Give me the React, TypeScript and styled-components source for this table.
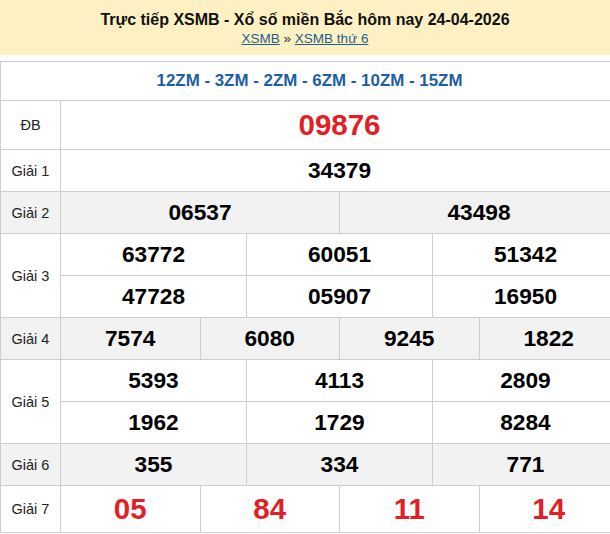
import React from "react";
import styled, { createGlobalStyle } from "styled-components";

const GlobalStyle = createGlobalStyle`
  html, body {
    margin: 0;
    padding: 0;
    overflow: hidden;
    background: #ffffff;
    font-family: "Liberation Sans", Arial, sans-serif;
  }
`;

const StyledPage = styled.div`
  width: 619px;
`;

const StyledHeader = styled.div`
  display: flex;
  flex-direction: column;
  align-items: center;
  justify-content: center;
  box-sizing: border-box;
  height: 55px;
  padding-top: 3px;
  background: #fdf1c4;
  margin-bottom: 6px;
  width: 610px;
`;

const StyledTitle = styled.h1`
  margin: 0;
  font-size: 16px;
  font-weight: bold;
  color: #111;
  line-height: 20px;
`;

const StyledCrumbs = styled.div`
  font-size: 13.5px;
  line-height: 18px;
  color: #333;
`;

const StyledCrumbLink = styled.a`
  color: #1e5e8e;
  text-decoration: underline;
`;

const StyledTable = styled.table`
  width: 619px;
  border-collapse: collapse;
  table-layout: fixed;
`;

const StyledCell = styled.td<{ $gray?: boolean; $height?: number }>`
  border: 1px solid #cdcdcd;
  padding: 0;
  text-align: center;
  height: ${({ $height }) => $height ?? 41}px;
  background: ${({ $gray }) => ($gray ? "#f2f2f2" : "#ffffff")};
`;

const StyledLabel = styled(StyledCell)`
  font-size: 14.5px;
  color: #222;
`;

const StyledCodes = styled(StyledCell)`
  font-size: 16.9px;
  font-weight: bold;
  color: #1d5ea8;
`;

const StyledNumber = styled(StyledCell)<{ $red?: boolean; $big?: boolean }>`
  font-size: ${({ $big }) => ($big ? 29.5 : 22.7)}px;
  font-weight: bold;
  color: ${({ $red }) => ($red ? "#e21f26" : "#000000")};
`;

interface PrizeRow {
  label: string;
  numbers: string[][];
  gray?: boolean;
  red?: boolean;
  big?: boolean;
  height?: number;
}

const prizes: PrizeRow[] = [
  { label: "ĐB", numbers: [["09876"]], red: true, big: true, height: 48 },
  { label: "Giải 1", numbers: [["34379"]] },
  { label: "Giải 2", numbers: [["06537", "43498"]], gray: true },
  { label: "Giải 3", numbers: [["63772", "60051", "51342"], ["47728", "05907", "16950"]] },
  { label: "Giải 4", numbers: [["7574", "6080", "9245", "1822"]], gray: true },
  { label: "Giải 5", numbers: [["5393", "4113", "2809"], ["1962", "1729", "8284"]] },
  { label: "Giải 6", numbers: [["355", "334", "771"]], gray: true },
  { label: "Giải 7", numbers: [["05", "84", "11", "14"]], red: true, big: true, height: 46 },
];

const App: React.FC = () => {
  return (
    <StyledPage>
      <GlobalStyle />
      <StyledHeader>
        <StyledTitle>Trực tiếp XSMB - Xổ số miền Bắc hôm nay 24-04-2026</StyledTitle>
        <StyledCrumbs>
          <StyledCrumbLink href="#">XSMB</StyledCrumbLink> »{" "}
          <StyledCrumbLink href="#">XSMB thứ 6</StyledCrumbLink>
        </StyledCrumbs>
      </StyledHeader>

      <StyledTable>
        <colgroup>
          <col style={{ width: 60 }} />
          {Array.from({ length: 12 }).map((_, i) => (
            <col key={i} />
          ))}
        </colgroup>
        <tbody>
          <tr>
            <StyledCodes colSpan={13} $height={38}>
              12ZM - 3ZM - 2ZM - 6ZM - 10ZM - 15ZM
            </StyledCodes>
          </tr>
          {prizes.map((prize) =>
            prize.numbers.map((line, lineIndex) => (
              <tr key={`${prize.label}-${lineIndex}`}>
                {lineIndex === 0 && (
                  <StyledLabel rowSpan={prize.numbers.length} $gray={prize.gray}>
                    {prize.label}
                  </StyledLabel>
                )}
                {line.map((num) => (
                  <StyledNumber
                    key={num}
                    colSpan={12 / line.length}
                    $gray={prize.gray}
                    $red={prize.red}
                    $big={prize.big}
                    $height={prize.height}
                  >
                    {num}
                  </StyledNumber>
                ))}
              </tr>
            ))
          )}
        </tbody>
      </StyledTable>
    </StyledPage>
  );
};

export default App;
